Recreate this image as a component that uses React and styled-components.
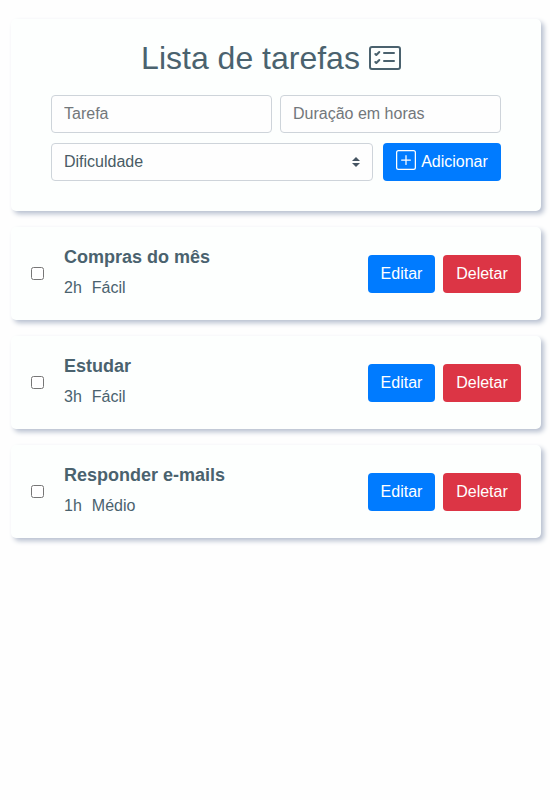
import React from "react";
import styled, { createGlobalStyle } from "styled-components";

const GlobalStyle = createGlobalStyle`
  *, *::before, *::after { box-sizing: border-box; }
  body {
    margin: 0;
    background: #fefefe;
    color: #4a626e;
    font-family: "Liberation Sans", Arial, sans-serif;
    font-size: 16px;
    line-height: 24px;
  }
`;

const Page = styled.main`
  display: flex;
  flex-direction: column;
  gap: 16px;
  min-height: 100vh;
  padding: 19px 9px 0 11px;
`;

const Card = styled.section`
  background: #fdfffe;
  border-radius: 5px;
  box-shadow: 3px 3px 5px #b8c0d0;
`;

const FormCard = styled(Card)`
  height: 192px;
  padding: 20px 40px 0;
`;

const Title = styled.h1`
  display: flex;
  justify-content: center;
  align-items: center;
  gap: 9px;
  height: 38px;
  margin: 0 0 18px;
  padding-right: 10px;
  font-size: 32px;
  font-weight: 400;
  line-height: 38px;
  white-space: nowrap;

  svg { flex: none; }
`;

const FormRow = styled.div`
  display: flex;
  gap: ${({ $gap }) => $gap}px;
  margin-bottom: 10px;
`;

const Input = styled.input`
  flex: 1;
  min-width: 0;
  height: 38px;
  padding: 6px 12px;
  border: 1px solid #ced4da;
  border-radius: 4px;
  background: #fefefe;
  color: #4a5963;
  font: inherit;

  &::placeholder { color: #72777b; opacity: 1; }
`;

const SelectBox = styled.div`
  display: flex;
  flex: 1;
  align-items: center;
  justify-content: space-between;
  height: 38px;
  padding: 0 12px;
  border: 1px solid #ced4da;
  border-radius: 4px;
  background: #fefefe;
  color: #495b65;
`;

const Button = styled.button`
  display: flex;
  align-items: center;
  justify-content: center;
  width: ${({ $width }) => $width}px;
  height: 38px;
  padding: 0;
  border: 0;
  border-radius: 4px;
  background: ${({ $danger }) => ($danger ? "#dc3545" : "#007bff")};
  color: #fff;
  font: inherit;
  white-space: nowrap;
`;

const PlusIcon = styled.svg`
  margin: -4px 5px 0 0;
`;

const TaskCard = styled(Card)`
  display: flex;
  align-items: center;
  height: 93px;
  padding: 0 20px;
`;

const Checkbox = styled.input`
  width: 13px;
  height: 13px;
  margin: 0 20px 0 0;
`;

const TaskText = styled.div`
  flex: 1;
`;

const TaskName = styled.h2`
  margin: 0 0 5px;
  font-size: 18px;
  font-weight: 700;
  line-height: 27px;
`;

const TaskMeta = styled.div`
  display: flex;
  gap: 10px;
  margin-bottom: 3px;
`;

const Actions = styled.div`
  display: flex;
  gap: 8px;
`;

const tasks = [
  { name: "Compras do mês", hours: 2, level: "Fácil" },
  { name: "Estudar", hours: 3, level: "Fácil" },
  { name: "Responder e-mails", hours: 1, level: "Médio" },
];

export default function App() {
  return (
    <>
      <GlobalStyle />
      <Page>
        <FormCard>
          <Title>
            Lista de tarefas
            <svg width="32" height="32" viewBox="0 0 16 16" fill="currentColor">
              <path d="M14.5 3a.5.5 0 0 1 .5.5v9a.5.5 0 0 1-.5.5h-13a.5.5 0 0 1-.5-.5v-9a.5.5 0 0 1 .5-.5h13zm-13-1A1.5 1.5 0 0 0 0 3.5v9A1.5 1.5 0 0 0 1.5 14h13a1.5 1.5 0 0 0 1.5-1.5v-9A1.5 1.5 0 0 0 14.5 2h-13z" />
              <path d="M7 5.5a.5.5 0 0 1 .5-.5h5a.5.5 0 0 1 0 1h-5a.5.5 0 0 1-.5-.5zm-1.496-.854a.5.5 0 0 1 0 .708l-1.5 1.5a.5.5 0 0 1-.708 0l-.5-.5a.5.5 0 1 1 .708-.708l.146.147 1.146-1.147a.5.5 0 0 1 .708 0zM7 9.5a.5.5 0 0 1 .5-.5h5a.5.5 0 0 1 0 1h-5a.5.5 0 0 1-.5-.5zm-1.496-.854a.5.5 0 0 1 0 .708l-1.5 1.5a.5.5 0 0 1-.708 0l-.5-.5a.5.5 0 0 1 .708-.708l.146.147 1.146-1.147a.5.5 0 0 1 .708 0z" />
            </svg>
          </Title>
          <FormRow $gap={8}>
            <Input placeholder="Tarefa" />
            <Input placeholder="Duração em horas" />
          </FormRow>
          <FormRow $gap={10}>
            <SelectBox role="combobox" aria-label="Dificuldade" tabIndex={0}>
              Dificuldade
              <svg width="8" height="10" viewBox="0 0 4 5" fill="#465563">
                <path d="M2 0L0 2h4zm0 5L0 3h4z" />
              </svg>
            </SelectBox>
            <Button $width={118}>
              <PlusIcon width="20" height="20" viewBox="0 0 16 16" fill="currentColor">
                <path d="M14 1a1 1 0 0 1 1 1v12a1 1 0 0 1-1 1H2a1 1 0 0 1-1-1V2a1 1 0 0 1 1-1h12zM2 0a2 2 0 0 0-2 2v12a2 2 0 0 0 2 2h12a2 2 0 0 0 2-2V2a2 2 0 0 0-2-2H2z" />
                <path d="M8 4a.5.5 0 0 1 .5.5v3h3a.5.5 0 0 1 0 1h-3v3a.5.5 0 0 1-1 0v-3h-3a.5.5 0 0 1 0-1h3v-3A.5.5 0 0 1 8 4z" />
              </PlusIcon>
              Adicionar
            </Button>
          </FormRow>
        </FormCard>
        {tasks.map((task) => (
          <TaskCard key={task.name}>
            <Checkbox type="checkbox" aria-label={task.name} />
            <TaskText>
              <TaskName>{task.name}</TaskName>
              <TaskMeta>
                <span>{task.hours}h</span>
                <span>{task.level}</span>
              </TaskMeta>
            </TaskText>
            <Actions>
              <Button $width={67}>Editar</Button>
              <Button $width={78} $danger>Deletar</Button>
            </Actions>
          </TaskCard>
        ))}
      </Page>
    </>
  );
}
